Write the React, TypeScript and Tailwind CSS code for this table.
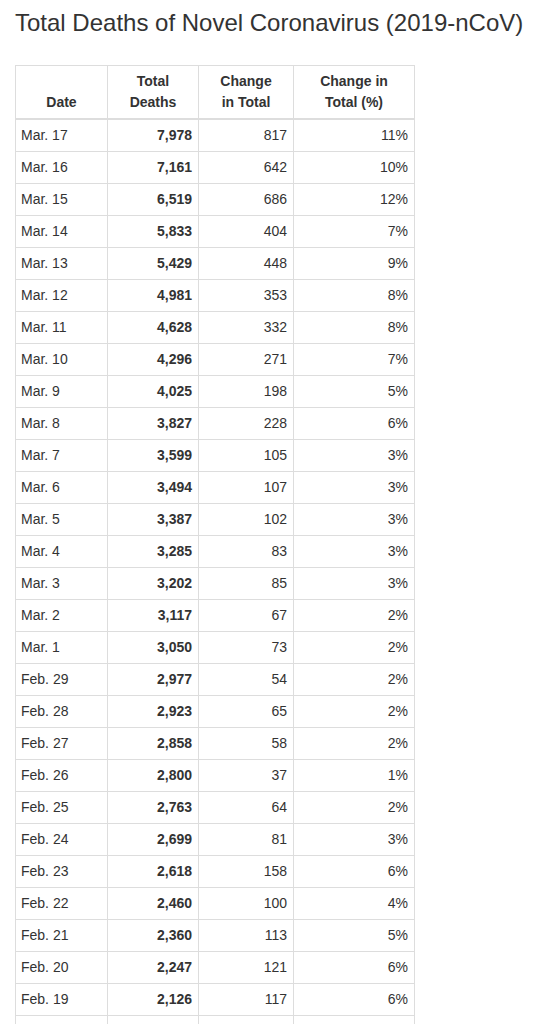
const rows: [string, string, string, string][] = [
  ["Mar. 17", "7,978", "817", "11%"],
  ["Mar. 16", "7,161", "642", "10%"],
  ["Mar. 15", "6,519", "686", "12%"],
  ["Mar. 14", "5,833", "404", "7%"],
  ["Mar. 13", "5,429", "448", "9%"],
  ["Mar. 12", "4,981", "353", "8%"],
  ["Mar. 11", "4,628", "332", "8%"],
  ["Mar. 10", "4,296", "271", "7%"],
  ["Mar. 9", "4,025", "198", "5%"],
  ["Mar. 8", "3,827", "228", "6%"],
  ["Mar. 7", "3,599", "105", "3%"],
  ["Mar. 6", "3,494", "107", "3%"],
  ["Mar. 5", "3,387", "102", "3%"],
  ["Mar. 4", "3,285", "83", "3%"],
  ["Mar. 3", "3,202", "85", "3%"],
  ["Mar. 2", "3,117", "67", "2%"],
  ["Mar. 1", "3,050", "73", "2%"],
  ["Feb. 29", "2,977", "54", "2%"],
  ["Feb. 28", "2,923", "65", "2%"],
  ["Feb. 27", "2,858", "58", "2%"],
  ["Feb. 26", "2,800", "37", "1%"],
  ["Feb. 25", "2,763", "64", "2%"],
  ["Feb. 24", "2,699", "81", "3%"],
  ["Feb. 23", "2,618", "158", "6%"],
  ["Feb. 22", "2,460", "100", "4%"],
  ["Feb. 21", "2,360", "113", "5%"],
  ["Feb. 20", "2,247", "121", "6%"],
  ["Feb. 19", "2,126", "117", "6%"],
  ["Feb. 18", "2,009", "136", "7%"],
];

const cell = "border border-[#ddd] pl-[5px] pr-[6px] py-[5px]";
const head = "border border-[#ddd] border-b-2 px-[5px] py-[5px] align-bottom text-center font-bold";

export default function App() {
  return (
    <div className="min-h-screen bg-white px-[15px] pt-[6px] text-[#333] [font-family:'Liberation_Sans',Arial,sans-serif]">
      <h1 className="whitespace-nowrap text-[24px] leading-[34px] font-normal">
        Total Deaths of Novel Coronavirus (2019-nCoV)
      </h1>

      <table className="mt-[25px] table-fixed border-collapse border border-[#ddd] text-[14px] leading-[21px]">
        <colgroup>
          <col className="w-[92px]" />
          <col className="w-[91px]" />
          <col className="w-[95px]" />
          <col className="w-[121px]" />
        </colgroup>
        <thead>
          <tr>
            <th className={head}>Date</th>
            <th className={head}>
              Total
              <br />
              Deaths
            </th>
            <th className={head}>
              Change
              <br />
              in Total
            </th>
            <th className={head}>
              Change in
              <br />
              Total (%)
            </th>
          </tr>
        </thead>
        <tbody>
          {rows.map(([date, total, change, pct]) => (
            <tr key={date}>
              <td className={`${cell} text-left`}>{date}</td>
              <td className={`${cell} text-right font-bold`}>{total}</td>
              <td className={`${cell} text-right`}>{change}</td>
              <td className={`${cell} text-right`}>{pct}</td>
            </tr>
          ))}
        </tbody>
      </table>
    </div>
  );
}
